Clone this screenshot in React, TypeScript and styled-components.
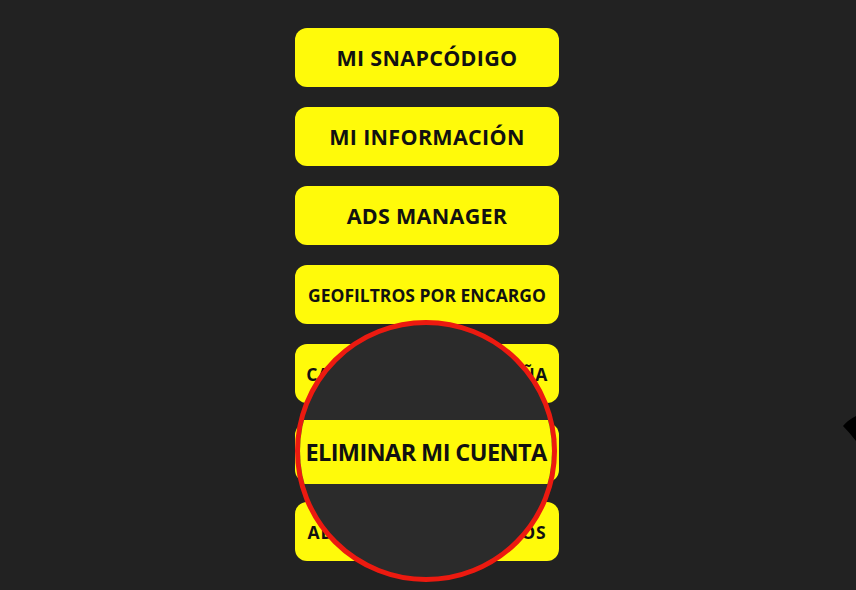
import React from "react";
import styled, { createGlobalStyle } from "styled-components";

const GlobalStyle = createGlobalStyle`
  html, body {
    margin: 0;
    padding: 0;
    background: #222222;
  }
  body {
    font-family: "Open Sans", "Noto Sans", "Liberation Sans", sans-serif;
  }
`;

const Page = styled.div`
  position: relative;
  width: 856px;
  height: 590px;
  overflow: hidden;
  background: #222222;
  display: flex;
  justify-content: center;
  padding-top: 28px;
  box-sizing: border-box;
`;

const Menu = styled.nav`
  display: flex;
  flex-direction: column;
  gap: 20px;
  margin-left: -2px;
`;

const MenuButton = styled.button<{ $small?: boolean; $tracking?: number }>`
  width: 264px;
  height: 59px;
  border: none;
  border-radius: 12px;
  background: #fffa0a;
  color: #111111;
  font-family: "Open Sans", "Noto Sans", sans-serif;
  font-weight: 700;
  font-size: ${(p) => (p.$small ? "17.5px" : "21.5px")};
  letter-spacing: ${(p) => p.$tracking ?? 0.3}px;
  white-space: nowrap;
  display: flex;
  align-items: center;
  justify-content: center;
  padding: 0;
  overflow: visible;
  cursor: pointer;
`;

const Magnifier = styled.div`
  position: absolute;
  left: 295px;
  top: 320px;
  width: 262px;
  height: 262px;
  box-sizing: border-box;
  border: 5px solid #ec1a10;
  border-radius: 50%;
  overflow: hidden;
  background: #2b2b2b;
  display: flex;
  align-items: center;
`;

const MagnifiedBand = styled.div`
  width: 100%;
  height: 64px;
  margin-top: 2px;
  background: #fffa0a;
  color: #111111;
  font-family: "Open Sans", "Noto Sans", sans-serif;
  font-weight: 700;
  font-size: 23.5px;
  letter-spacing: -0.6px;
  white-space: nowrap;
  display: flex;
  align-items: center;
  justify-content: center;
`;

const Cursor = styled.svg`
  position: absolute;
  left: 843px;
  top: 414px;
`;

const items: { label: string; small?: boolean; tracking?: number }[] = [
  { label: "MI SNAPCÓDIGO" },
  { label: "MI INFORMACIÓN" },
  { label: "ADS MANAGER" },
  { label: "GEOFILTROS POR ENCARGO", small: true, tracking: 0 },
  { label: "CAMBIAR MI CONTRASEÑA", small: true, tracking: 0.5 },
  { label: "ELIMINAR MI CUENTA" },
  { label: "ADMINISTRAR MIS DATOS", small: true, tracking: 0.8 },
];

export default function App() {
  return (
    <>
      <GlobalStyle />
      <Page>
        <Menu>
          {items.map((it) => (
            <MenuButton key={it.label} $small={it.small} $tracking={it.tracking}>
              {it.label}
            </MenuButton>
          ))}
        </Menu>
        <Magnifier>
          <MagnifiedBand>ELIMINAR MI CUENTA</MagnifiedBand>
        </Magnifier>
        <Cursor width="13" height="28" viewBox="0 0 13 28">
          <path d="M0 12 Q5 6 13 2 L13 27 Q6 18 0 12 Z" fill="#000" />
        </Cursor>
      </Page>
    </>
  );
}
